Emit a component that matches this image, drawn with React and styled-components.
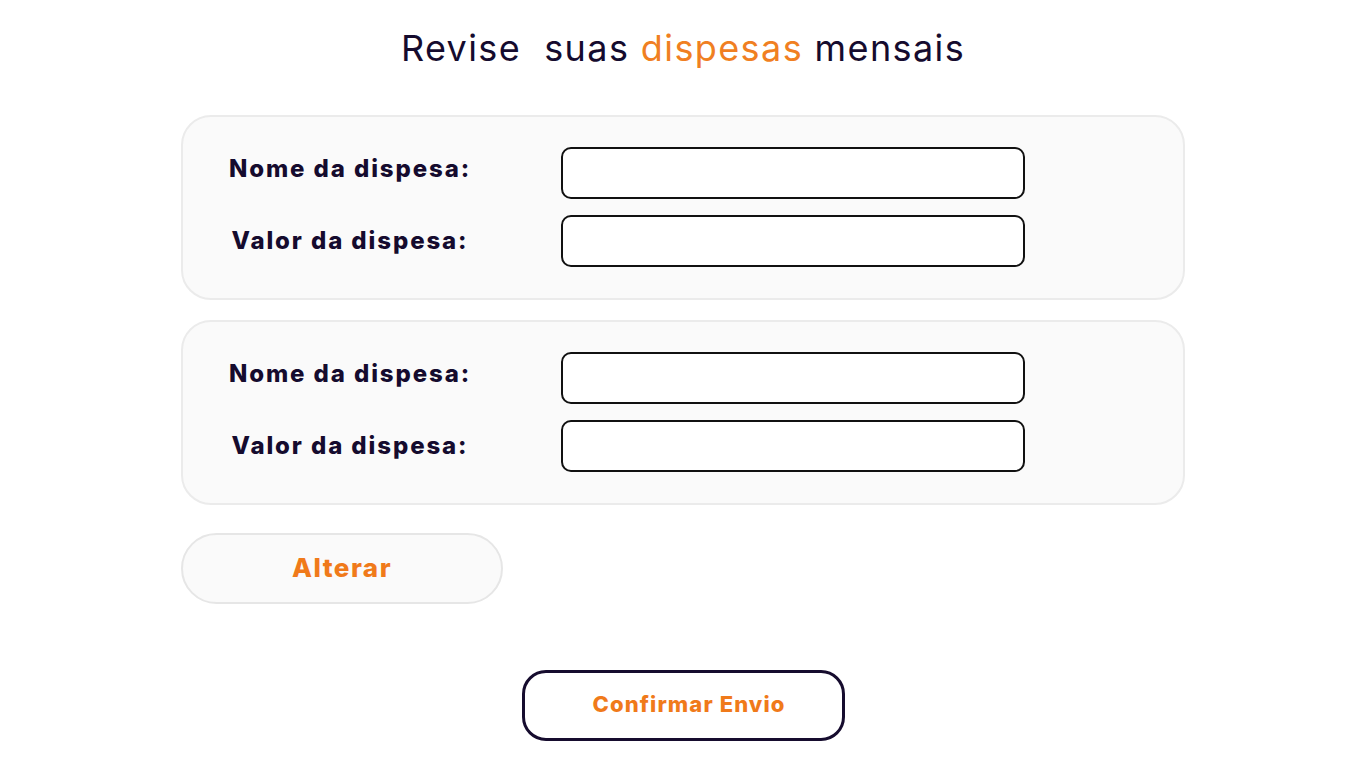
import React from "react";
import styled, { createGlobalStyle } from "styled-components";

const GlobalStyle = createGlobalStyle`
  body {
    margin: 0;
    background: #fff;
    font-family: "Inter", "Noto Sans", sans-serif;
  }
`;

const Page = styled.main`
  width: 1366px;
  display: flex;
  flex-direction: column;
  align-items: center;
`;

const Title = styled.h1`
  margin: 26px 0 0;
  height: 44px;
  line-height: 44px;
  font-size: 36px;
  font-weight: 400;
  letter-spacing: 1.4px;
  color: #150b2e;
  white-space: pre;
  span {
    color: #f07f22;
  }
`;

const Form = styled.section`
  width: 1004px;
  margin-top: 45px;
  display: flex;
  flex-direction: column;
  gap: 20px;
`;

const Card = styled.div`
  box-sizing: border-box;
  height: 185px;
  padding: 30px 0;
  background: #fafafa;
  border: 2px solid #ebebeb;
  border-radius: 30px;
  display: flex;
  flex-direction: column;
  gap: 16px;
`;

const Row = styled.div`
  display: grid;
  grid-template-columns: 334px 464px;
  column-gap: 44px;
  align-items: center;
`;

const Label = styled.label`
  text-align: center;
  font-size: 24px;
  font-weight: 800;
  letter-spacing: 1.9px;
  color: #150b2e;
  position: relative;
  top: ${(p) => p.$shift}px;
`;

const Input = styled.input`
  box-sizing: border-box;
  height: 52px;
  width: 464px;
  border: 2px solid #111;
  border-radius: 10px;
  background: #fff;
  outline: none;
`;

const AlterButton = styled.button`
  box-sizing: border-box;
  align-self: flex-start;
  margin-top: 8px;
  width: 322px;
  height: 71px;
  padding-bottom: 4px;
  border: 2px solid #e6e6e6;
  border-radius: 36px;
  background: #fafafa;
  font-family: inherit;
  font-size: 26px;
  font-weight: 800;
  letter-spacing: 1.5px;
  color: #f07a1a;
`;

const ConfirmButton = styled.button`
  box-sizing: border-box;
  margin-top: 66px;
  width: 323px;
  height: 71px;
  padding: 0 0 4px 12px;
  border: 3px solid #160c2e;
  border-radius: 24px;
  background: #fff;
  font-family: inherit;
  font-size: 22px;
  font-weight: 800;
  letter-spacing: 1.1px;
  color: #f07a1a;
`;

const fields = ["Nome da dispesa:", "Valor da dispesa:"];

const ExpenseCard = () => (
  <Card>
    {fields.map((f, i) => (
      <Row key={f}>
        <Label $shift={i === 0 ? -5 : -1}>{f}</Label>
        <Input type="text" />
      </Row>
    ))}
  </Card>
);

export default function App() {
  return (
    <>
      <GlobalStyle />
      <Page>
        <Title>
          Revise  suas <span>dispesas</span> mensais
        </Title>
        <Form>
          <ExpenseCard />
          <ExpenseCard />
          <AlterButton>Alterar</AlterButton>
        </Form>
        <ConfirmButton>Confirmar Envio</ConfirmButton>
      </Page>
    </>
  );
}
